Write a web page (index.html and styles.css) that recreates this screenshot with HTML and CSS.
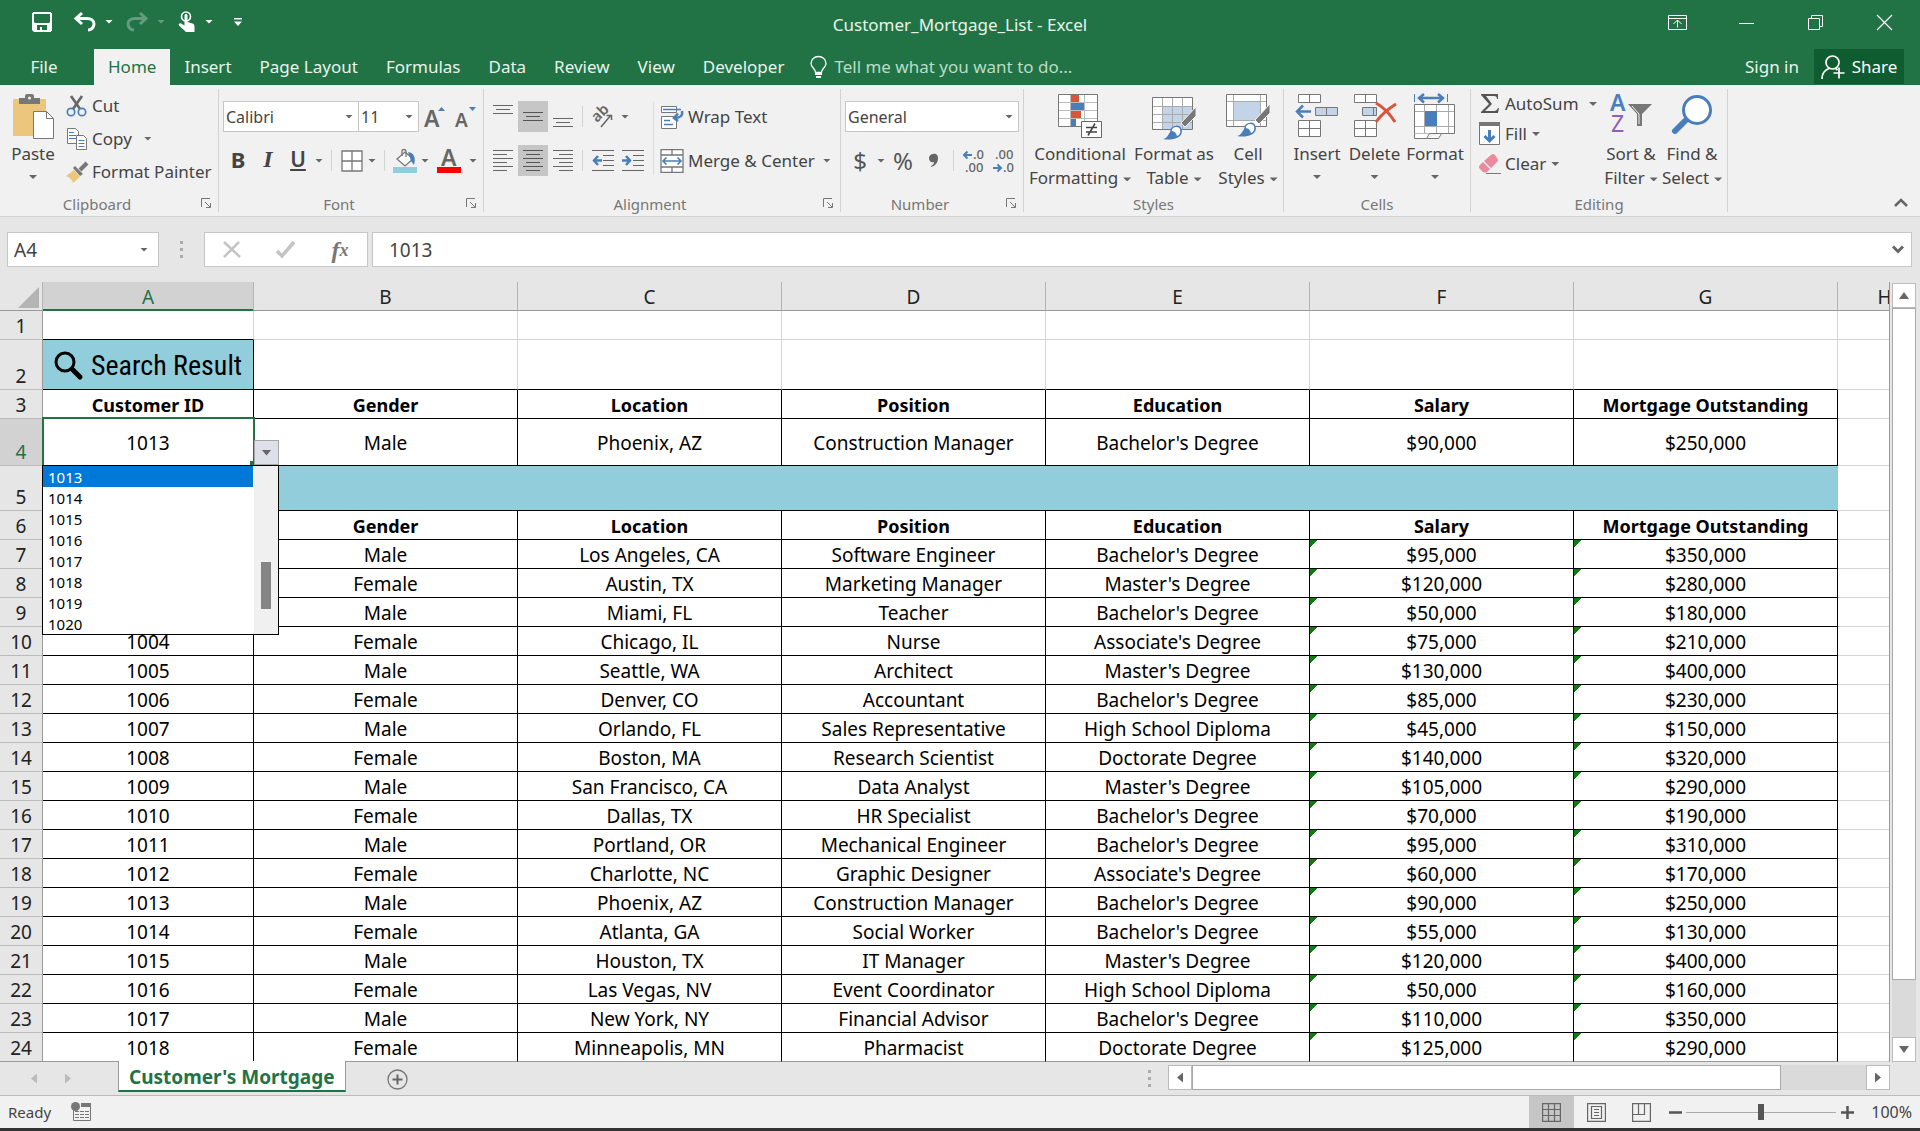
FILE: index.html
```html
<!DOCTYPE html>
<html lang="en">
<head>
<meta charset="utf-8">
<title>Customer_Mortgage_List - Excel</title>
<link rel="stylesheet" href="styles.css">
</head>
<body>
<header class="titlebar">
  <div class="quick">
    <button class="q-save" aria-label="Save"><svg width="20" height="20" viewBox="0 0 20 20"><path fill="#fff" fill-rule="evenodd" d="M1 0h18v1h1v18h-1v1H2l-2-2V1h1zM2 2v8l1 1h14l1-1V2zM5 13v5h3v-3h2v3h5v-5z"/></svg></button>
    <button class="q-icon" aria-label="Undo"><svg width="22" height="20" viewBox="0 0 22 20"><path fill="none" stroke="#fff" stroke-width="3" d="M8 1L2 6.500 8 12M2 6.500h11c4 0 7 2 7 5.500s-3 6-6 6"/></svg></button>
    <button class="q-caret" aria-label="Undo history"><i class="caret light"></i></button>
    <button class="q-icon faded" aria-label="Redo"><svg width="22" height="20" viewBox="0 0 22 20"><path fill="none" stroke="#fff" stroke-width="3" d="M14 1l6 5.500L14 12M20 6.500H9C5 6.500 2 8.500 2 12s3 6 6 6"/></svg></button>
    <button class="q-caret faded" aria-label="Redo history"><i class="caret light"></i></button>
    <button class="q-touch" aria-label="Touch or mouse mode"><svg width="18" height="22" viewBox="0 0 18 22"><circle cx="8" cy="5.500" r="4.500" fill="none" stroke="#fff" stroke-width="1.600"/><path fill="#fff" d="M6.500 4.500c0-2 3-2 3 0V11l5 1.500c1.500.5 2 1.500 2 3V21H8L1 14.500c-1-1.500.8-2.700 2-2l3.500 2z"/></svg></button>
    <button class="q-caret" aria-label="Touch options"><i class="caret light"></i></button>
    <button class="q-more" aria-label="Customize toolbar"><svg width="8" height="8" viewBox="0 0 8 8"><path fill="#fff" d="M0 0h8v1.500H0zM0 3.500h8L4 8z"/></svg></button>
  </div>
  <h1 class="title">Customer_Mortgage_List - Excel</h1>
  <div class="window-buttons">
    <button aria-label="Ribbon display options"><svg width="19" height="15" viewBox="0 0 19 15"><path fill="none" stroke="#fff" d="M.5.5h18v14H.5zM.5 3.500h18M9.500 12.500v-7M5.500 9l4-4 4 4"/></svg></button>
    <button aria-label="Minimize"><svg width="15" height="15" viewBox="0 0 15 15"><path stroke="#fff" d="M0 8.500h15"/></svg></button>
    <button aria-label="Restore"><svg width="15" height="15" viewBox="0 0 15 15"><path fill="none" stroke="#fff" d="M.5 3.500h11v11H.5zM3.500 3.500v-3h11v11h-3"/></svg></button>
    <button aria-label="Close"><svg width="15" height="15" viewBox="0 0 15 15"><path stroke="#fff" stroke-width="1.200" d="M0 0l15 15M15 0L0 15"/></svg></button>
  </div>
</header>

<nav class="tabs">
  <a href="#" class="file">File</a>
  <a href="#" class="active">Home</a>
  <a href="#">Insert</a>
  <a href="#">Page Layout</a>
  <a href="#">Formulas</a>
  <a href="#">Data</a>
  <a href="#">Review</a>
  <a href="#">View</a>
  <a href="#">Developer</a>
  <button class="tell"><svg width="17" height="22" viewBox="0 0 17 22"><path fill="none" stroke="#fff" stroke-width="1.300" d="M5.500 16.500c0-4-4.500-5-4.500-9a7.500 7 0 0 1 15 0c0 4-4.500 5-4.500 9z"/><path fill="#fff" d="M5 16h7v3H5zM6 20h5v2H6z"/></svg>Tell me what you want to do...</button>
  <span class="spacer"></span>
  <a href="#" class="signin">Sign in</a>
  <button class="share"><svg width="24" height="24" viewBox="0 0 24 24"><g fill="none" stroke="#fff" stroke-width="1.700"><circle cx="11.500" cy="7.500" r="6.500"/><path d="M1 24c0-5 3-9 7-10.500M14.500 13.500l2 1.500M18 12.500v11M12.500 18H23.500"/></g></svg>Share</button>
</nav>

<section class="ribbon" aria-label="Home ribbon">
  <div class="group clipboard">
    <div class="body">
      <button class="big paste">
        <svg width="44" height="46" viewBox="0 0 44 46"><path fill="#ecc67c" d="M2 6q0-1 1-1h31q1 0 1 1v36H3q-1 0-1-1z"/><path fill="#777" d="M8 4h6V2q0-2 2-2h5q2 0 2 2v2h6v6H8z"/><circle cx="18.500" cy="4" r="1.500" fill="#f1f1f1"/><path fill="#fff" stroke="#777" d="M22.500 17.500h13l7 7v20h-20z"/><path fill="none" stroke="#777" d="M35.500 17.500v7h7"/></svg>
        <span>Paste</span><i class="caret"></i>
      </button>
      <div class="stack">
        <button><svg width="22" height="22" viewBox="0 0 22 22"><path fill="none" stroke="#666" stroke-width="2.600" d="M5 1l9 13M16 1L7 14"/><g fill="none" stroke="#4a7ebb" stroke-width="1.700"><circle cx="5" cy="17" r="3.700"/><circle cx="16" cy="17" r="3.700"/></g></svg>Cut</button>
        <button><svg width="22" height="22" viewBox="0 0 22 22"><path fill="#fff" stroke="#777" d="M1.500.5h8l3 3v12h-11z"/><path stroke="#4a7ebb" d="M3 4.500h5M3 7.500h7M3 10.500h7"/><path fill="#fff" stroke="#777" d="M10.500 7.500h7l3 3v11h-10z"/><path stroke="#4a7ebb" d="M12.500 12.500h6M12.500 15.500h6M12.500 18.500h6"/></svg>Copy<i class="caret far"></i></button>
        <button><svg width="22" height="22" viewBox="0 0 22 22"><path fill="#ecc67c" d="M8 9l6 7-7 6c-1-4-4-6-7-7z"/><path fill="#777" d="M9 5l8 8-3 2-7-8z"/><path stroke="#777" stroke-width="4" d="M14 9l7-7"/></svg>Format Painter</button>
      </div>
    </div>
    <div class="caption"><span>Clipboard</span><button aria-label="Clipboard settings"><svg width="10" height="10" viewBox="0 0 10 10"><path fill="none" stroke="#777" d="M.5 9V.5H9M4 4l5 5M9.500 5v4.500H5"/></svg></button></div>
  </div>

  <div class="group font">
    <div class="body rows">
      <div class="row">
        <label class="combo w-font"><select aria-label="Font"><option>Calibri</option></select><i class="caret"></i></label>
        <label class="combo w-size"><select aria-label="Font size"><option>11</option></select><i class="caret"></i></label>
        <button class="t31" aria-label="Increase font size"><svg width="24" height="24" viewBox="0 0 24 24"><text x="1" y="22" class="glyph g23">A</text><path fill="#4a7ebb" d="M15 6l3.500-4L22 6z"/></svg></button>
        <button class="t31" aria-label="Decrease font size"><svg width="24" height="24" viewBox="0 0 24 24"><text x="1" y="22" class="glyph g19">A</text><path fill="#4a7ebb" d="M15 2l3.500 4L22 2z"/></svg></button>
      </div>
      <div class="row">
        <button class="t30 bold">B</button><button class="t30 italic">I</button><button class="t30 under">U</button><button class="drop" aria-label="Underline styles"><i class="caret"></i></button>
        <span class="sep wide"></span>
        <button class="t28" aria-label="Borders"><svg width="22" height="22" viewBox="0 0 22 22"><path fill="#fff" stroke="#777" stroke-width="1.300" d="M1 1h20v20H1zM11 1v20M1 11h20"/></svg></button><button class="drop" aria-label="Border styles"><i class="caret"></i></button>
        <span class="sep wide"></span>
        <button class="t28" aria-label="Fill color"><svg width="24" height="24" viewBox="0 0 24 24"><path fill="#fff" stroke="#777" stroke-width="1.300" d="M12 3l8 7-8 7-8-7z"/><path fill="none" stroke="#777" stroke-width="1.300" d="M9 7V2q0-1.500 2-1.500T13 2v6"/><path fill="#4a7ebb" d="M15 3c6 1 8 5 6 13l-3-4z"/><path fill="#92cddc" d="M0 18h24v6H0z"/></svg></button><button class="drop" aria-label="Fill colors"><i class="caret"></i></button>
        <button class="t36" aria-label="Font color"><svg width="24" height="24" viewBox="0 0 24 24"><text x="4" y="17" class="glyph g23">A</text><path fill="#f00" d="M0 18h24v6H0z"/></svg></button><button class="drop" aria-label="Font colors"><i class="caret"></i></button>
      </div>
    </div>
    <div class="caption"><span>Font</span><button aria-label="Font settings"><svg width="10" height="10" viewBox="0 0 10 10"><path fill="none" stroke="#777" d="M.5 9V.5H9M4 4l5 5M9.500 5v4.500H5"/></svg></button></div>
  </div>

  <div class="group alignment">
    <div class="body">
      <div class="rows">
        <div class="row">
          <button class="t30" aria-label="Top align"><svg width="20" height="24" viewBox="0 0 20 24"><path stroke="#666" d="M0 .5h20M3 4.500h14M0 8.500h20" /></svg></button><button class="t30 on" aria-label="Middle align"><svg width="20" height="24" viewBox="0 0 20 24"><path stroke="#555" d="M0 7.500h20M3 11.500h14M0 15.500h20"/></svg></button><button class="t30" aria-label="Bottom align"><svg width="20" height="24" viewBox="0 0 20 24"><path stroke="#666" d="M0 13.500h20M3 17.500h14M0 21.500h20"/></svg></button>
          <span class="sep"></span>
          <button class="t32" aria-label="Orientation"><svg width="22" height="22" viewBox="0 0 22 22"><text x="0" y="0" class="glyph g15" transform="translate(5 17) rotate(-45)">ab</text><path fill="none" stroke="#666" stroke-width="1.500" d="M9 21L19 9M14.500 9.500H19.500V14"/></svg></button><button class="drop" aria-label="Orientation options"><i class="caret"></i></button>
        </div>
        <div class="row">
          <button class="t30" aria-label="Align left"><svg width="20" height="22" viewBox="0 0 20 22"><path stroke="#666" d="M0 .5h20M0 4.500h14M0 8.500h20M0 12.500h14M0 16.500h20M0 20.500h14"/></svg></button><button class="t30 on" aria-label="Center"><svg width="20" height="22" viewBox="0 0 20 22"><path stroke="#555" d="M0 .5h20M3 4.500h14M0 8.500h20M3 12.500h14M0 16.500h20M3 20.500h14"/></svg></button><button class="t30" aria-label="Align right"><svg width="20" height="22" viewBox="0 0 20 22"><path stroke="#666" d="M0 .5h20M6 4.500h14M0 8.500h20M6 12.500h14M0 16.500h20M6 20.500h14"/></svg></button>
          <span class="sep"></span>
          <button class="t32" aria-label="Decrease indent"><svg width="22" height="22" viewBox="0 0 22 22"><path stroke="#666" d="M0 .5h22M11 5.500h11M11 10.500h11M11 15.500h11M0 20.500h22"/><path fill="none" stroke="#4a7ebb" stroke-width="2.500" d="M10 10.500H2M6 6l-4 4.500L6 15"/></svg></button><button class="t28" aria-label="Increase indent"><svg width="22" height="22" viewBox="0 0 22 22"><path stroke="#666" d="M0 .5h22M11 5.500h11M11 10.500h11M11 15.500h11M0 20.500h22"/><path fill="none" stroke="#4a7ebb" stroke-width="2.500" d="M0 10.500h8M4 6l4 4.500L4 15"/></svg></button>
        </div>
      </div>
      <div class="rows divided">
        <button class="wide-button"><svg width="24" height="24" viewBox="0 0 24 24"><path fill="#fff" stroke="#777" d="M1.500 1.500h15v6h-15zM1.500 11.500h15v12h-15z"/><path fill="none" stroke="#4a7ebb" stroke-width="1.300" d="M3 4.500h18M4 15.500h6M4 19.500h9"/><path fill="none" stroke="#4a7ebb" stroke-width="2.500" d="M22 6c1 5-2 7-8 7M18 8.500L14 13l4 3"/></svg>Wrap Text</button>
        <button class="wide-button"><svg width="24" height="24" viewBox="0 0 24 24"><path fill="#fff" stroke="#777" stroke-width="1.300" d="M1 .7h22v22.600H1zM1 6h22M1 18h22M12 .7V6M12 18v5"/><path fill="none" stroke="#4a7ebb" stroke-width="1.600" d="M3 12h18M6.500 8.500L3 12l3.500 3.500M17.500 8.500L21 12l-3.500 3.500"/></svg>Merge &amp; Center<i class="caret"></i></button>
      </div>
    </div>
    <div class="caption"><span>Alignment</span><button aria-label="Alignment settings"><svg width="10" height="10" viewBox="0 0 10 10"><path fill="none" stroke="#777" d="M.5 9V.5H9M4 4l5 5M9.500 5v4.500H5"/></svg></button></div>
  </div>

  <div class="group number">
    <div class="body rows">
      <div class="row">
        <label class="combo w-number"><select aria-label="Number format"><option>General</option></select><i class="caret"></i></label>
      </div>
      <div class="row">
        <button class="t30 symbol">$</button><button class="drop" aria-label="Currencies"><i class="caret"></i></button><button class="t32 symbol">%</button><button class="t30" aria-label="Comma style"><svg width="10" height="16" viewBox="0 0 10 16"><path fill="#666" d="M4 1c3-1 5 1 5 4 0 5-3 8-7 9v-1c2-1 3-2 3-4C2 10 0 8 0 5c0-2 2-4 4-4z"/></svg></button>
        <span class="sep"></span>
        <button class="t32" aria-label="Increase decimal"><svg width="24" height="26" viewBox="0 0 24 26"><text x="11" y="11" class="glyph g13">.0</text><text x="3" y="24" class="glyph g13">.00</text><path fill="none" stroke="#4a7ebb" stroke-width="2" d="M10 7H2M5.500 3.500L2 7l3.500 3.500"/></svg></button><button class="t28" aria-label="Decrease decimal"><svg width="24" height="26" viewBox="0 0 24 26"><text x="3" y="11" class="glyph g13">.00</text><text x="11" y="24" class="glyph g13">.0</text><path fill="none" stroke="#4a7ebb" stroke-width="2" d="M1 20h8M5.500 16.500L9 20l-3.500 3.500"/></svg></button>
      </div>
    </div>
    <div class="caption"><span>Number</span><button aria-label="Number settings"><svg width="10" height="10" viewBox="0 0 10 10"><path fill="none" stroke="#777" d="M.5 9V.5H9M4 4l5 5M9.500 5v4.500H5"/></svg></button></div>
  </div>

  <div class="group styles">
    <div class="body">
      <button class="big b108">
        <svg width="44" height="46" viewBox="0 0 44 46"><path fill="#fff" d="M1 1h38v31H1z"/><path fill="#d8553a" d="M13 1h8v7h-8zM13 17h10v7H13z"/><path fill="#4a7ebb" d="M13 9h13v7H13zM13 25h5v7h-5z"/><path fill="none" stroke="#bbb" d="M1 8.500h38M1 16.500h38M1 24.500h38M12.500 1v31M26.500 1v31"/><path fill="none" stroke="#777" d="M.5.5h39v32H.5z"/><path fill="#fff" stroke="#666" d="M23.500 27.500h20v16h-20z"/><path stroke="#444" stroke-width="1.500" d="M28 33.500h11M28 38h11M37 29.500l-7 12"/></svg>
        <span>Conditional</span><span>Formatting<i class="caret near"></i></span>
      </button>
      <button class="big b80">
        <svg width="44" height="46" viewBox="0 0 44 46"><path fill="#fff" d="M1 4h39v32H1z"/><path fill="#c3d4e8" d="M11 12h29v24H11z"/><path fill="none" stroke="#aaa" d="M1 12.500h39M1 20.500h39M1 28.500h39M10.500 4v32M20.500 4v32M30.500 4v32"/><path fill="none" stroke="#777" d="M.5 3.500h40v32H.5z"/><path fill="#777" stroke="#f1f1f1" d="M44 13v9L33 33l-4-4z"/><path fill="#fff" stroke="#4a7ebb" stroke-width="1.500" d="M19 37c1-6 9-6 10-1s-3 8-10 8z"/><path fill="#4a7ebb" d="M11 45c5-1 5-5 8-8 4 0 6 3 6 6-3 3-9 3-14 2z"/></svg>
        <span>Format as</span><span>Table<i class="caret near"></i></span>
      </button>
      <button class="big b68">
        <svg width="44" height="46" viewBox="0 0 44 46"><path fill="#fff" stroke="#777" d="M.5.5h40v32H.5z"/><path fill="#c3d4e8" d="M8 8h26v18H8z"/><path fill="none" stroke="#aaa" d="M1 7.500h39M1 26.500h39M7.500 1v31M34.500 1v31"/><path fill="#777" stroke="#f1f1f1" d="M44 10v9L33 30l-4-4z"/><path fill="#fff" stroke="#4a7ebb" stroke-width="1.500" d="M19 34c1-6 9-6 10-1s-3 8-10 8z"/><path fill="#4a7ebb" d="M11 42c5-1 5-5 8-8 4 0 6 3 6 6-3 3-9 3-14 2z"/></svg>
        <span>Cell</span><span>Styles<i class="caret near"></i></span>
      </button>
    </div>
    <div class="caption"><span>Styles</span></div>
  </div>

  <div class="group cells">
    <div class="body">
      <button class="big b54">
        <svg width="44" height="46" viewBox="0 0 44 46"><g stroke="#777"><path fill="#fff" d="M3.500.5h22v8h-22zM14.500.5v8M3.500 26.500h22v16h-22zM14.500 26.500v16M3.500 34.500h22"/><path fill="#c3d4e8" d="M20.500 13.500h22v8h-22zM31.500 13.500v8"/></g><path fill="none" stroke="#4a7ebb" stroke-width="2.500" d="M16 17.500H2M8 11.500l-6 6 6 6"/></svg>
        <span>Insert</span><i class="caret"></i>
      </button>
      <button class="big b61">
        <svg width="44" height="46" viewBox="0 0 44 46"><g stroke="#777"><path fill="#fff" d="M1.500.5h22v8h-22zM12.500.5v8M1.500 26.500h22v16h-22zM12.500 26.500v16M1.500 34.500h22"/><path fill="#c3d4e8" d="M9.500 13.500h14v8h-14zM20.500 13.500v8"/></g><path fill="none" stroke="#d8553a" stroke-width="3" d="M23 9c7 4 14 11 19 19M43 10c-8 5-15 11-20 18"/></svg>
        <span>Delete</span><i class="caret"></i>
      </button>
      <button class="big b60">
        <svg width="42" height="46" viewBox="0 0 42 46"><path fill="#fff" stroke="#777" d="M.5 10.500h40v29H.5z"/><path fill="none" stroke="#aaa" d="M1 17.500h39M1 32.500h39M10.500 11v28M22.500 11v28M34.500 11v28"/><path fill="#4a7ebb" d="M11 17h12v15H11z"/><path fill="#fff" stroke="#777" d="M.5 39.500v5h12l3-5M12.500 44.500h12l3-5"/><path fill="none" stroke="#4a7ebb" stroke-width="2.500" d="M5 4h24M10 0L5 4l5 4.500M24 0l5 4-5 4.500"/><path stroke="#4a7ebb" d="M.5 0v8M33.500 0v8"/></svg>
        <span>Format</span><i class="caret"></i>
      </button>
    </div>
    <div class="caption"><span>Cells</span></div>
  </div>

  <div class="group editing">
    <div class="body">
      <div class="stack">
        <button><svg width="22" height="22" viewBox="0 0 22 22"><path fill="#555" d="M2 1h17v5h-1c0-2-1-3-3-3H7l6 8-7 7h9c2 0 3-1 4-3h1l-1 5H2v-1l8-8-8-9z"/></svg>AutoSum<i class="caret end"></i></button>
        <button><svg width="22" height="24" viewBox="0 0 22 24"><path fill="#fff" stroke="#777" d="M.5 1.500h20v21H.5z"/><path fill="#777" d="M0 0h21v4H0z"/><path fill="none" stroke="#4a7ebb" stroke-width="3" d="M10.500 8v11M5.500 14l5 5 5-5"/></svg>Fill<i class="caret near"></i></button>
        <button><svg width="22" height="22" viewBox="0 0 22 22"><path fill="#e98a9d" d="M12 2q2-2 4 0l2 3q2 2 0 4l-6 6-7-7zM4 9l7 7-3 3q-2 1-4 0l-3-3q-2-2 0-4z"/><path stroke="#777" d="M7 20.500h15"/></svg>Clear<i class="caret near"></i></button>
      </div>
      <button class="big b60">
        <svg width="42" height="46" viewBox="0 0 42 46"><text x="0" y="17" class="glyph g23 blue">A</text><text x="1" y="38" class="glyph g23 purple">Z</text><path fill="#777" d="M18 10h24L32 20v12h-5V20z"/><path fill="none" stroke="#f1f1f1" d="M22 12l7 8v10"/></svg>
        <span>Sort &amp;</span><span>Filter<i class="caret near"></i></span>
      </button>
      <button class="big b62">
        <svg width="42" height="46" viewBox="0 0 42 46"><path stroke="#4a7ebb" stroke-width="6" stroke-linecap="round" d="M4 37l12-12"/><circle cx="26" cy="16" r="13.500" fill="#fff" stroke="#4a7ebb" stroke-width="3"/></svg>
        <span>Find &amp;</span><span>Select<i class="caret near"></i></span>
      </button>
    </div>
    <div class="caption"><span>Editing</span></div>
  </div>
  <button class="collapse" aria-label="Collapse the ribbon"><svg width="14" height="10" viewBox="0 0 14 10"><path fill="none" stroke="#666" stroke-width="2.500" d="M1 8l6-6 6 6"/></svg></button>
</section>

<section class="formula-bar">
  <label class="name-box"><input value="A4" aria-label="Name box"><i class="caret"></i></label>
  <span class="dots"><i></i><i></i><i></i></span>
  <div class="formula-buttons">
    <button aria-label="Cancel"><svg width="18" height="18" viewBox="0 0 18 18"><path fill="none" stroke="#c4c4c4" stroke-width="2.500" d="M1 1l16 15M16 1L1 16"/></svg></button>
    <button aria-label="Enter"><svg width="20" height="18" viewBox="0 0 20 18"><path fill="none" stroke="#c4c4c4" stroke-width="3.500" d="M1 10l5 5L18 1"/></svg></button>
    <button class="fx" aria-label="Insert function">f<small>x</small></button>
  </div>
  <div class="formula-input"><input value="1013" aria-label="Formula"><button aria-label="Expand formula bar"><svg width="12" height="9" viewBox="0 0 12 9"><path fill="none" stroke="#666" stroke-width="3" d="M1 1.500l5 5 5-5"/></svg></button></div>
</section>

<main class="sheet">
  <div class="grid">
    <table>
      <colgroup><col class="c-row"><col class="c-a"><col class="c-n" span="6"><col class="c-h"></colgroup>
      <thead><tr><th class="corner"><svg width="21" height="21" viewBox="0 0 21 21"><path fill="#b4b4b4" d="M21 0v21H0z"/></svg></th><th class="picked">A</th><th>B</th><th>C</th><th>D</th><th>E</th><th>F</th><th>G</th><th>H</th></tr></thead>
      <tbody>
        <tr class="blank above"><th>1</th><td></td><td></td><td></td><td></td><td></td><td></td><td></td><td></td></tr>
        <tr class="blank tall"><th>2</th><td class="search"><div><svg width="30" height="30" viewBox="0 0 30 30"><circle cx="11" cy="11" r="9" fill="none" stroke="#000" stroke-width="3"/><path stroke="#000" stroke-width="5" stroke-linecap="round" d="M19 19l7 7"/></svg>Search Result</div></td><td></td><td></td><td></td><td></td><td></td><td></td><td></td></tr>
        <tr class="heads"><th>3</th><td>Customer ID</td><td>Gender</td><td>Location</td><td>Position</td><td>Education</td><td>Salary</td><td>Mortgage Outstanding</td><td></td></tr>
        <tr class="result"><th class="picked">4</th><td class="selected">1013
          <button class="open-list" aria-label="Open list"><i class="caret"></i></button>
          <div class="list"><ul role="listbox" aria-label="Customer ID"><li role="option" aria-selected="true">1013</li><li role="option">1014</li><li role="option">1015</li><li role="option">1016</li><li role="option">1017</li><li role="option">1018</li><li role="option">1019</li><li role="option">1020</li></ul><span class="list-track"><span class="list-thumb"></span></span></div>
        </td><td>Male</td><td>Phoenix, AZ</td><td>Construction Manager</td><td>Bachelor's Degree</td><td>$90,000</td><td>$250,000</td><td></td></tr>
        <tr class="band"><th>5</th><td colspan="7"></td><td></td></tr>
        <tr class="heads"><th>6</th><td>Customer ID</td><td>Gender</td><td>Location</td><td>Position</td><td>Education</td><td>Salary</td><td>Mortgage Outstanding</td><td></td></tr>
        <tr class="data"><th>7</th><td>1001</td><td>Male</td><td>Los Angeles, CA</td><td>Software Engineer</td><td>Bachelor's Degree</td><td>$95,000</td><td>$350,000</td><td></td></tr>
        <tr class="data"><th>8</th><td>1002</td><td>Female</td><td>Austin, TX</td><td>Marketing Manager</td><td>Master's Degree</td><td>$120,000</td><td>$280,000</td><td></td></tr>
        <tr class="data"><th>9</th><td>1003</td><td>Male</td><td>Miami, FL</td><td>Teacher</td><td>Bachelor's Degree</td><td>$50,000</td><td>$180,000</td><td></td></tr>
        <tr class="data"><th>10</th><td>1004</td><td>Female</td><td>Chicago, IL</td><td>Nurse</td><td>Associate's Degree</td><td>$75,000</td><td>$210,000</td><td></td></tr>
        <tr class="data"><th>11</th><td>1005</td><td>Male</td><td>Seattle, WA</td><td>Architect</td><td>Master's Degree</td><td>$130,000</td><td>$400,000</td><td></td></tr>
        <tr class="data"><th>12</th><td>1006</td><td>Female</td><td>Denver, CO</td><td>Accountant</td><td>Bachelor's Degree</td><td>$85,000</td><td>$230,000</td><td></td></tr>
        <tr class="data"><th>13</th><td>1007</td><td>Male</td><td>Orlando, FL</td><td>Sales Representative</td><td>High School Diploma</td><td>$45,000</td><td>$150,000</td><td></td></tr>
        <tr class="data"><th>14</th><td>1008</td><td>Female</td><td>Boston, MA</td><td>Research Scientist</td><td>Doctorate Degree</td><td>$140,000</td><td>$320,000</td><td></td></tr>
        <tr class="data"><th>15</th><td>1009</td><td>Male</td><td>San Francisco, CA</td><td>Data Analyst</td><td>Master's Degree</td><td>$105,000</td><td>$290,000</td><td></td></tr>
        <tr class="data"><th>16</th><td>1010</td><td>Female</td><td>Dallas, TX</td><td>HR Specialist</td><td>Bachelor's Degree</td><td>$70,000</td><td>$190,000</td><td></td></tr>
        <tr class="data"><th>17</th><td>1011</td><td>Male</td><td>Portland, OR</td><td>Mechanical Engineer</td><td>Bachelor's Degree</td><td>$95,000</td><td>$310,000</td><td></td></tr>
        <tr class="data"><th>18</th><td>1012</td><td>Female</td><td>Charlotte, NC</td><td>Graphic Designer</td><td>Associate's Degree</td><td>$60,000</td><td>$170,000</td><td></td></tr>
        <tr class="data"><th>19</th><td>1013</td><td>Male</td><td>Phoenix, AZ</td><td>Construction Manager</td><td>Bachelor's Degree</td><td>$90,000</td><td>$250,000</td><td></td></tr>
        <tr class="data"><th>20</th><td>1014</td><td>Female</td><td>Atlanta, GA</td><td>Social Worker</td><td>Bachelor's Degree</td><td>$55,000</td><td>$130,000</td><td></td></tr>
        <tr class="data"><th>21</th><td>1015</td><td>Male</td><td>Houston, TX</td><td>IT Manager</td><td>Master's Degree</td><td>$120,000</td><td>$400,000</td><td></td></tr>
        <tr class="data"><th>22</th><td>1016</td><td>Female</td><td>Las Vegas, NV</td><td>Event Coordinator</td><td>High School Diploma</td><td>$50,000</td><td>$160,000</td><td></td></tr>
        <tr class="data"><th>23</th><td>1017</td><td>Male</td><td>New York, NY</td><td>Financial Advisor</td><td>Bachelor's Degree</td><td>$110,000</td><td>$350,000</td><td></td></tr>
        <tr class="data last"><th>24</th><td>1018</td><td>Female</td><td>Minneapolis, MN</td><td>Pharmacist</td><td>Doctorate Degree</td><td>$125,000</td><td>$290,000</td><td></td></tr>
      </tbody>
    </table>
  </div>
  <div class="v-scroll">
    <button aria-label="Scroll up"><i class="tri up"></i></button>
    <span class="v-thumb"></span><span class="v-rest"></span>
    <button aria-label="Scroll down"><i class="tri down"></i></button>
  </div>
</main>

<section class="sheet-bar">
  <button class="nav" aria-label="Previous sheet"><i class="tri left pale"></i></button>
  <button class="nav" aria-label="Next sheet"><i class="tri right pale"></i></button>
  <a href="#" class="sheet-tab">Customer's Mortgage</a>
  <button class="add" aria-label="New sheet"><svg width="21" height="21" viewBox="0 0 21 21"><circle cx="10.500" cy="10.500" r="9.500" fill="none" stroke="#777" stroke-width="1.300"/><path stroke="#666" stroke-width="2" d="M10.500 5.500v10M5.500 10.500h10"/></svg></button>
  <span class="spacer"></span>
  <span class="dots small"><i></i><i></i><i></i></span>
  <div class="h-scroll">
    <button aria-label="Scroll left"><i class="tri left"></i></button>
    <span class="h-thumb"></span><span class="h-rest"></span>
    <button aria-label="Scroll right"><i class="tri right"></i></button>
  </div>
</section>

<footer class="status">
  <span>Ready</span>
  <button class="macro" aria-label="Record macro"><svg width="20" height="20" viewBox="0 0 20 20"><path fill="none" stroke="#777" d="M2.500 8v10.500h17V1"/><path fill="#777" d="M10 1h10v4H10z"/><circle cx="4.500" cy="4.500" r="4.500" fill="#777"/><path stroke="#777" stroke-dasharray="4 1" d="M4 9.500h14M4 12.500h14M4 15.500h14"/></svg></button>
  <span class="spacer"></span>
  <button class="view on" aria-label="Normal view"><svg width="19" height="19" viewBox="0 0 19 19"><path fill="none" stroke="#666" stroke-width="1.200" d="M.6.6h17.800v17.800H.6zM6.500.5v18M12.500.5v18M.5 6.500h18M.5 12.500h18"/></svg></button>
  <button class="view" aria-label="Page layout view"><svg width="19" height="19" viewBox="0 0 19 19"><path fill="none" stroke="#666" stroke-width="1.200" d="M.6.6h17.800v17.800H.6zM4.500 3.500h10v12h-10zM7 6.500h5M7 9.500h5M7 12.500h5"/></svg></button>
  <button class="view" aria-label="Page break preview"><svg width="19" height="19" viewBox="0 0 19 19"><path fill="none" stroke="#666" stroke-width="1.200" d="M.6.6h17.800v17.800H.6zM.5 11.500h12V.5M6.500.5v11"/></svg></button>
  <button class="zoom-step" aria-label="Zoom out"><svg width="13" height="13" viewBox="0 0 13 13"><path stroke="#555" stroke-width="2.500" d="M0 6.500h13"/></svg></button>
  <input type="range" class="zoom" min="0" max="100" value="50" aria-label="Zoom">
  <button class="zoom-step" aria-label="Zoom in"><svg width="13" height="13" viewBox="0 0 13 13"><path stroke="#555" stroke-width="2.500" d="M0 6.500h13M6.500 0v13"/></svg></button>
  <span class="percent">100%</span>
</footer>
</body>
</html>
```

FILE: styles.css
```css
* { box-sizing: border-box; }
body {
  margin: 0;
  min-height: 100vh;
  display: flex;
  flex-direction: column;
  background: #333;
  color: #444;
  font: 17px/24px "Noto Sans", sans-serif;
}
button, input, select {
  font: inherit;
  color: inherit;
  border: 0;
  margin: 0;
  padding: 0;
  background: none;
  border-radius: 0;
}
button { display: flex; align-items: center; justify-content: center; white-space: nowrap; }
a { color: inherit; text-decoration: none; }
svg { display: block; flex: none; overflow: visible; }
.spacer { flex: 1; }

.caret {
  display: inline-block;
  flex: none;
  width: 8px;
  height: 4px;
  background: #666;
  clip-path: polygon(0 0, 100% 0, 50% 100%);
}
.caret.light { background: #fff; }
.caret.near { margin-left: 5px; vertical-align: middle; }
.stack .caret.near { margin-left: 1px; }
.caret.far { margin-left: 8px; }
.caret.end { margin-left: auto; }

/* title bar */
.titlebar {
  height: 49px;
  display: grid;
  grid-template-columns: 1fr auto 1fr;
  background: #217346;
  color: #fff;
}
.quick { display: flex; align-items: center; padding: 0 0 6px 32px; }
.q-save { width: 20px; margin-right: 22px; }
.q-icon { width: 22px; }
.q-touch { width: 18px; }
.q-caret { width: 30px; padding-right: 4px; }
.q-more { width: 24px; }
.faded { opacity: .3; }
.title { margin: 0; font-size: 17px; font-weight: 400; line-height: 49px; color: #e8f3ec; }
.window-buttons { display: flex; justify-content: flex-end; padding: 0 1px 4px 0; }
.window-buttons button { width: 69px; }

/* ribbon tabs */
.tabs { height: 36px; display: flex; background: #217346; color: #e8f3ec; line-height: 36px; white-space: nowrap; }
.tabs a { padding: 0 14px; }
.tabs .file { width: 88px; margin-right: 6px; text-align: center; }
.tabs .active { background: #f1f1f1; color: #217346; }
.tell { margin-left: 12px; gap: 7px; color: #b8dcc6; }
.tabs .signin { padding-right: 15px; }
.share { width: 90px; height: 35px; margin-right: 16px; gap: 7px; background: #0e5c2f; color: #fff; }

/* ribbon */
.ribbon { display: flex; background: #f1f1f1; border-bottom: 1px solid #d2d2d2; height: 132px; }
.group { display: flex; flex-direction: column; margin: 4px 0; border-right: 1px solid #d2d2d2; }
.clipboard { width: 219px; }
.font { width: 265px; }
.alignment { width: 357px; }
.number { width: 183px; }
.styles { width: 260px; }
.cells { width: 187px; }
.editing { width: 257px; }
.body { flex: 1; display: flex; }
.caption { height: 18px; display: flex; font-size: 15px; line-height: 20px; color: #777; }
.caption span { flex: 1; text-align: center; }
.caption button { width: 24px; }
.big { flex-direction: column; justify-content: flex-start; padding-top: 5px; }
.big svg { height: 46px; margin-bottom: 2px; }
.big > .caret { margin-top: 9px; }
.paste { width: 58px; margin-left: 4px; }
.b54 { width: 54px; }
.b60 { width: 60px; }
.b61 { width: 61px; }
.b62 { width: 62px; }
.b68 { width: 68px; }
.b80 { width: 80px; }
.b108 { width: 108px; }
.styles .body { padding-left: 2px; }
.cells .body { padding-left: 6px; }
.stack { display: flex; flex-direction: column; }
.stack button { height: 33px; gap: 4px; padding-left: 4px; justify-content: flex-start; }
.editing .stack { width: 130px; padding-left: 4px; }
.editing .stack button { height: 30px; }
.editing .caret.end { margin-right: 4px; }
.rows { display: flex; flex-direction: column; gap: 13px; padding: 12px 0 0 4px; }
.row { display: flex; height: 31px; }
.combo { display: flex; align-items: center; background: #fff; border: 1px solid #c6c6c6; }
.combo select { flex: 1; min-width: 0; height: 29px; padding-left: 2px; font-size: 16px; appearance: none; }
.combo .caret { margin-right: 5px; }
.w-font { width: 136px; }
.w-size { width: 61px; margin-left: -1px; }
.w-number { width: 174px; }
.t28 { width: 28px; }
.t30 { width: 30px; }
.t31 { width: 31px; }
.t32 { width: 32px; }
.t36 { width: 36px; }
.drop { width: 12px; }
.on { background: #c6c6c6; }
.sep { width: 1px; margin: 5px 4px; background: #d2d2d2; }
.sep.wide { margin: 5px 6px; }
.bold { font-size: 22px; font-weight: 700; }
.italic { font: italic 700 24px "Liberation Serif", serif; }
.under { font-size: 21px; font-weight: 600; text-decoration: underline; text-decoration-thickness: 2px; text-underline-offset: 2px; }
.bold, .italic, .under { padding-bottom: 3px; }
.symbol { font-size: 24px; color: #555; }
.glyph { font-family: "Noto Sans", sans-serif; fill: #666; }
.g13 { font-size: 13px; font-weight: 500; }
.g15 { font-size: 15px; font-weight: 600; }
.g19 { font-size: 19px; font-weight: 600; }
.g23 { font-size: 23px; font-weight: 600; }
.blue { fill: #4a7ebb; }
.purple { fill: #8e5fb5; font-weight: 400; }
.alignment .rows + .rows { margin: 0 0 0 6px; padding-left: 7px; }
.divided { background: linear-gradient(#dcdcdc, #dcdcdc) 0 13px / 1px 73px no-repeat; }
.wide-button { height: 31px; gap: 4px; justify-content: flex-start; }
.wide-button .caret { margin-left: 4px; }
.collapse { margin: auto 12px 8px auto; }

/* formula bar */
.formula-bar { height: 65px; display: flex; padding: 15px 8px 15px 7px; background: #e6e6e6; font-size: 19px; }
.name-box, .formula-buttons, .formula-input { display: flex; align-items: center; background: #fff; border: 1px solid #c6c6c6; }
.name-box { width: 152px; }
.name-box input { flex: 1; min-width: 0; padding-left: 6px; }
.name-box .caret { margin-right: 10px; }
.dots { display: flex; flex-direction: column; justify-content: center; align-items: center; gap: 4px; width: 45px; }
.dots i { width: 3px; height: 3px; background: #aaa; }
.formula-buttons { width: 164px; }
.formula-buttons button { flex: 1; }
.fx { font: italic 700 24px/24px "Liberation Serif", serif; color: #777; }
.fx small { font-size: 18px; }
.formula-input { flex: 1; margin-left: 4px; }
.formula-input input { flex: 1; padding-left: 16px; }
.formula-input button { width: 26px; }

/* worksheet */
.sheet { flex: 1; display: flex; background: #e6e6e6; }
.grid { flex: 1; min-width: 0; overflow: hidden; background: #fff; border-right: 1px solid #999; }
table { table-layout: fixed; width: 1932px; border-collapse: separate; border-spacing: 0; color: #000; font-size: 19px; line-height: 26px; }
.c-row { width: 43px; }
.c-a { width: 211px; }
.c-n { width: 264px; }
.c-h { width: 94px; }
th, td { height: 29px; padding: 0; text-align: center; border-right: 1px solid #000; border-bottom: 1px solid #000; white-space: nowrap; }
td { padding-top: 2px; }
td:last-child, .blank td { border-color: #d4d4d4; }
th { font-weight: 400; color: #222; background: #e6e6e6; border-color: #bbb; vertical-align: bottom; }
thead th { border-bottom-color: #999; border-right-color: #b4b4b4; }
tbody th { border-right-color: #999; }
.corner svg { margin: 3px 3px 2px auto; }
.picked { background: #d2d2d2; color: #217346; }
thead .picked { box-shadow: inset 0 -1px #217346; border-bottom-color: #217346; }
.above td:nth-child(2) { border-bottom-color: #000; }
.tall > * { height: 50px; }
.blank.tall td:not(:last-child) { border-bottom-color: #000; }
.blank .search { background: #92cddc; border-color: #000; }
.search div { display: flex; align-items: center; justify-content: center; gap: 7px; font: 28px/40px "Roboto Condensed", Roboto, sans-serif; }
.heads td { font-size: 18px; font-weight: 700; }
.result > * { height: 47px; }
.band > * { height: 45px; }
.band td:nth-child(2) { background: #92cddc; border-right-color: #92cddc; }
.data td:nth-child(7), .data td:nth-child(8) { background: linear-gradient(135deg, #107c10 5px, transparent 5px); }
.last > * { border-bottom-color: #999; }
.selected { position: relative; }
.selected::before { content: ""; position: absolute; inset: -2px -2px -1px -1px; border: 2px solid #217346; border-bottom: 0; pointer-events: none; }
.selected::after { content: ""; position: absolute; right: -1px; bottom: 0; width: 4px; height: 4px; background: #217346; }
.open-list { position: absolute; left: 211px; bottom: 0; width: 25px; height: 25px; background: #dde0e8; border: 1px solid #a6a6a6; z-index: 2; }
.open-list .caret { width: 10px; height: 6px; }
.list { position: absolute; left: -1px; top: 46px; width: 237px; height: 170px; display: flex; background: #fff; border: 1px solid #000; z-index: 2; font-size: 15px; line-height: 20px; text-align: left; }
.list ul { flex: 1; margin: 0; padding: 0; list-style: none; }
.list li { padding: 1px 0 0 5px; }
.list li[aria-selected] { background: #0078d7; color: #fff; }
.list-track { width: 24px; margin-left: 1px; padding: 96px 7px 0; background: #f0f0f0; }
.list-thumb { display: block; height: 47px; background: #858585; }

/* scroll bars */
.v-scroll { width: 30px; display: flex; flex-direction: column; padding: 1px 4px 0 2px; }
.v-scroll button, .h-scroll button { flex: none; width: 24px; height: 25px; background: #fff; border: 1px solid #bbb; }
.v-thumb { flex: 673; background: #fff; border: 1px solid #aaa; }
.v-rest { flex: 57; background: #dadada; }
.tri { width: 10px; height: 7px; background: #666; }
.up { clip-path: polygon(50% 0, 100% 100%, 0 100%); }
.down { clip-path: polygon(0 0, 100% 0, 50% 100%); }
.left, .right { width: 6px; height: 10px; }
.left { clip-path: polygon(100% 0, 100% 100%, 0 50%); }
.right { clip-path: polygon(0 0, 100% 50%, 0 100%); }
.pale { background: #bbb; }

/* sheet tabs */
.sheet-bar { height: 34px; display: flex; background: #e6e6e6; border-bottom: 1px solid #bbb; padding-left: 17px; }
.nav { width: 34px; }
.sheet-tab { position: relative; margin: -1px 0 3px 33px; padding: 0 10px; background: #fff; border: 1px solid #999; border-width: 0 1px 2px; border-bottom-color: #217346; color: #217346; font-size: 19px; line-height: 32px; font-weight: 700; white-space: nowrap; }
.add { margin-left: 41px; padding-top: 2px; }
.dots.small { width: 38px; }
.h-scroll { flex: 0 0 722px; display: flex; margin-right: 30px; padding-top: 3px; height: 28px; }
.h-thumb { flex: 588; background: #fff; border: 1px solid #aaa; }
.h-rest { flex: 85; background: #dadada; }

/* status bar */
.status { height: 32px; margin-bottom: 3px; display: flex; align-items: center; padding: 0 8px; background: #f1f1f1; font-size: 15px; }
.macro { margin-left: 20px; }
.view { width: 45px; height: 32px; }
.zoom-step { width: 22px; }
.zoom { width: 150px; height: 20px; appearance: none; background: linear-gradient(#aaa, #aaa) center / 100% 1px no-repeat; }
.zoom::-webkit-slider-thumb { appearance: none; width: 6px; height: 16px; background: #555; }
.percent { margin-left: 13px; font-size: 16px; }
```
